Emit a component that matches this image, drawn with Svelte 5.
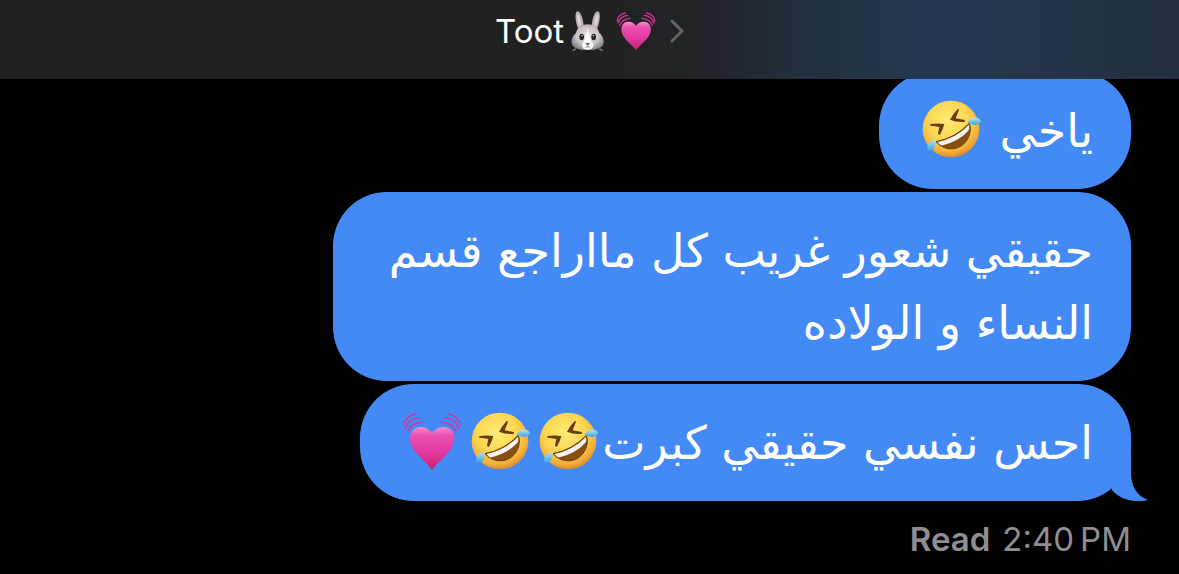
<script>
  const messages = [
    { text: 'ياخي ', emoji: ['laugh'] },
    { text: 'حقيقي شعور غريب كل مااراجع قسم النساء و الولاده', emoji: [] },
    { text: 'احس نفسي حقيقي كبرت', emoji: ['laugh', 'laugh', 'heart'] }
  ];
</script>

{#snippet laugh()}
  <svg class="emoji" viewBox="62 31 180 180" role="img" aria-label="🤣">
    <circle cx="152" cy="121" r="85" fill="url(#face)" />
    <path d="M90 106Q112 103 132 106Q128 122 119 138Q114 139 113 134L117 115Q105 112 90 111Z" fill="#6b3c06" />
    <path d="M173 60Q158 75 149 93Q172 102 194 99Q196 94 190 93L166 89Q171 76 176 63Z" fill="#6b3c06" />
    <path d="M107 159Q165 148 207 104Q215 125 203 149Q190 174 162 180Q129 184 107 159Z" fill="#87500f" />
    <path d="M111 160Q168 148 206 108Q210 117 204 126Q176 158 123 171Q115 167 111 160Z" fill="#f6f4f2" />
    <path d="M107 159Q165 148 207 104Q215 125 203 149Q190 174 162 180Q129 184 107 159Z" fill="none" stroke="#6b3c06" stroke-width="3" />
    <path d="M201 102Q210 87 225 87Q240 88 242 98Q238 108 225 109Q213 107 201 102Z" fill="url(#tear)" />
    <path d="M103 152Q108 168 101 179Q94 188 83 187Q77 180 84 167Q91 157 103 152Z" fill="url(#tear)" />
  </svg>
{/snippet}

{#snippet heart()}
  <svg class="emoji" viewBox="30 40 180 180" role="img" aria-label="💓">
    <path d="M120 217C102 190 54 162 54 122C54 100 69 88 86 88C102 88 115 97 120 108C125 97 138 88 154 88C172 88 187 100 187 122C187 162 138 190 120 217Z" fill="url(#heart)" />
    <g class="beats">
      <path d="M35 84Q40 54 72 49M39 94Q49 64 82 60M47 104Q56 77 93 73" />
      <path d="M205 84Q200 54 168 49M201 94Q191 64 158 60M193 104Q184 77 147 73" />
    </g>
  </svg>
{/snippet}

<svg class="paints" aria-hidden="true">
  <defs>
    <radialGradient id="face" cx=".45" cy=".35" r=".66">
      <stop offset="0" stop-color="#ffec78" />
      <stop offset=".55" stop-color="#fbd650" />
      <stop offset=".85" stop-color="#f2ae38" />
      <stop offset="1" stop-color="#d98a2b" />
    </radialGradient>
    <linearGradient id="tear" x2="0" y2="1">
      <stop offset="0" stop-color="#b3e6fa" />
      <stop offset="1" stop-color="#3c9fdf" />
    </linearGradient>
    <linearGradient id="heart" x2="0" y2="1">
      <stop offset="0" stop-color="#f58fcd" />
      <stop offset=".2" stop-color="#ec50b0" />
      <stop offset=".6" stop-color="#e0389f" />
      <stop offset="1" stop-color="#c9206a" />
    </linearGradient>
    <radialGradient id="fur" cx=".5" cy=".45" r=".6">
      <stop offset="0" stop-color="#e6e0e3" />
      <stop offset=".6" stop-color="#c9c0c5" />
      <stop offset="1" stop-color="#827a7e" />
    </radialGradient>
  </defs>
</svg>

<div class="screen">
  <header>
    <button class="contact">
      <span>Toot</span>
      <svg class="emoji" viewBox="262 32 120 120" role="img" aria-label="🐰">
        <path d="M286 145L276 152M356 145L366 152" stroke="#77716f" stroke-width="5" />
        <path d="M294 88C284 68 280 34 291 33C302 34 309 62 310 88ZM348 88C358 68 362 34 351 33C340 34 333 62 332 88Z" fill="#b8b0b3" />
        <path d="M297 78C289 64 287 43 291 41C298 45 302 64 301 80ZM345 78C353 64 355 43 351 41C344 45 340 64 341 80Z" fill="#e8cdd2" />
        <path d="M321 72C343 72 352 84 356 98C364 104 370 115 369 127C368 142 350 149 321 149C292 149 274 142 273 127C272 115 278 104 286 98C290 84 299 72 321 72Z" fill="url(#fur)" />
        <path d="M321 84C325 103 328 119 336 128C343 138 334 148 321 148C308 148 299 138 306 128C314 119 317 103 321 84Z" fill="#fbfafa" />
        <ellipse cx="303" cy="110" rx="7" ry="10" fill="#262322" />
        <ellipse cx="339" cy="110" rx="7" ry="10" fill="#262322" />
        <circle cx="304" cy="106" r="2" fill="#fff" />
        <circle cx="338" cy="106" r="2" fill="#fff" />
        <path d="M314 129Q321 126 328 129L321 136Z" fill="#725a58" />
        <path d="M321 135V140M314 141Q321 137 328 141" fill="none" stroke="#725a58" stroke-width="2" />
      </svg>
      {@render heart()}
      <svg class="chevron" viewBox="0 0 14 24" aria-hidden="true"><path d="M2 2L12 12L2 22" /></svg>
    </button>
  </header>

  <main>
    {#each messages as message, i}
      <p class="bubble" dir="rtl" lang="ar">
        {message.text}{#each message.emoji as name}{#if name === 'laugh'}{@render laugh()}{:else}{@render heart()}{/if}{/each}
        {#if i === messages.length - 1}
          <svg class="tail" viewBox="0 0 40 50" aria-hidden="true"><path d="M22 0V22C22 35 28 45 39 49C36 50 32 50 28 50C18 50 9 46 3 39L0 0Z" /></svg>
        {/if}
      </p>
    {/each}
    <div class="receipt"><b>Read</b><time>2:40&#8239;PM</time></div>
  </main>
</div>

<style>
  :global(body) {
    margin: 0;
    background: #000;
  }
  .paints {
    position: absolute;
    width: 0;
    height: 0;
  }
  .screen {
    min-height: 100vh;
    overflow: hidden;
    background: #000;
    color: #fff;
    font-family: Inter, "Liberation Sans", sans-serif;
  }
  header {
    position: relative;
    z-index: 1;
    display: flex;
    justify-content: center;
    box-sizing: border-box;
    height: 79px;
    padding-top: 8px;
    background: linear-gradient(90deg, #212121 0 52%, #22252a 60%, #233140 69%, #25374e 77%, #25374e 84%, #232f3e 100%);
  }
  .contact {
    display: flex;
    align-items: center;
    height: 46px;
    padding: 0;
    border: 0;
    background: none;
    color: #fff;
    font: 400 33px/46px Inter, "Liberation Sans", sans-serif;
  }
  .contact .emoji {
    width: 40px;
    height: 40px;
    margin: 0 0 0 4px;
  }
  .contact .emoji + :global(.emoji) {
    width: 40px;
    height: 40px;
    margin: 0 0 0 8px;
  }
  .contact .beats {
    stroke-width: 6px;
  }
  .chevron {
    width: 14px;
    height: 24px;
    margin-left: 14px;
    fill: none;
    stroke: #636366;
    stroke-width: 3px;
    stroke-linecap: round;
    stroke-linejoin: round;
  }
  main {
    display: flex;
    flex-direction: column;
    align-items: flex-end;
    gap: 3px;
    margin-top: -7px;
    padding: 0 48px 0 24px;
  }
  .bubble {
    position: relative;
    box-sizing: border-box;
    max-width: 798px;
    margin: 0;
    padding: 23px 38px 22px;
    border-radius: 54px;
    background: #448af7;
    font: 400 46px/72px "DejaVu Sans", sans-serif;
  }
  .emoji {
    flex: none;
    width: 60px;
    height: 60px;
    margin: 0 4px;
    vertical-align: -12px;
  }
  .beats {
    fill: none;
    stroke: #d63398;
    stroke-width: 4px;
    stroke-linecap: round;
  }
  .tail {
    position: absolute;
    right: -18px;
    bottom: 0;
    width: 40px;
    height: 50px;
    fill: #448af7;
  }
  .receipt {
    display: flex;
    gap: 12px;
    margin-top: 15px;
    color: #8e8e93;
    font-size: 33px;
    line-height: 40px;
  }
  .receipt b {
    font-weight: 600;
  }
</style>
